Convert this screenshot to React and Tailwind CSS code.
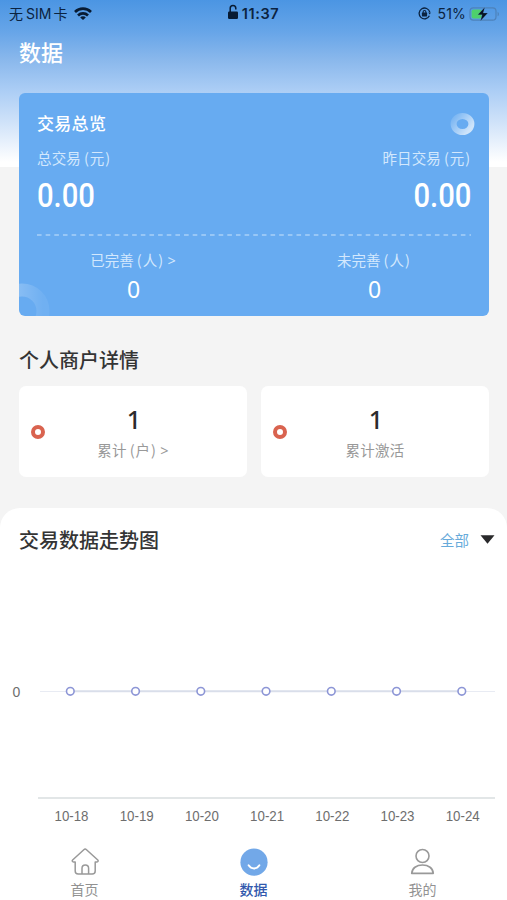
import React from 'react'

const days = ["10-18", "10-19", "10-20", "10-21", "10-22", "10-23", "10-24"];

const StatusBar = () => {
  return (
    <div className="grid h-[27px] grid-cols-3 items-center pl-[9px] pr-[7px] text-[14px] text-[#0b2340]">
      <div className="flex items-center">
        <span className="whitespace-nowrap">
          无<span className="ml-[3px] mr-[2px] font-[Inter] text-[14px] font-normal">SIM</span>卡
        </span>
        <svg className="ml-[7px] -mt-[1px]" width="18" height="13" viewBox="0 0 18 13" fill="none" stroke="#081b33" strokeWidth="2.7">
          <path d="M1 4.9a11.6 11.6 0 0 1 16 0" />
          <path d="M4 8.4a7.3 7.3 0 0 1 10 0" />
          <path d="M6.2 10.5a3.8 3.8 0 0 1 5.6 0L9 13z" fill="#081b33" stroke="none" />
        </svg>
      </div>
      <div className="flex items-center justify-center pr-[3px]">
        <svg className="-mt-[4px]" width="12" height="16" viewBox="0 0 12 16">
          <path d="M3.2 8V4.3a2.8 2.8 0 0 1 5.6 0v1.2" fill="none" stroke="#081b33" strokeWidth="1.5" />
          <rect x="1" y="7.4" width="10" height="7.6" rx="1.2" fill="#081b33" />
        </svg>
        <span className="ml-[3px] font-[Inter] text-[14.5px] font-semibold tracking-[0.6px]">11:37</span>
      </div>
      <div className="flex items-center justify-end">
        <svg width="13" height="13" viewBox="0 0 13 13" fill="none" stroke="#0b2340">
          <path d="M11.8 5.2A5.4 5.4 0 1 0 11.4 8.8" strokeWidth="1.3" />
          <path d="M10.2 5.4h2.6l-1 2z" fill="#0b2340" stroke="none" />
          <path d="M5.1 6V4.9a1.4 1.4 0 0 1 2.8 0V6" strokeWidth="1.1" />
          <rect x="3.9" y="5.6" width="5.2" height="3.8" rx=".6" fill="#0b2340" stroke="none" />
        </svg>
        <span className="ml-[6px] font-[Inter] text-[14px] tracking-[0.2px]">51%</span>
        <svg className="ml-[3px]" width="31" height="16" viewBox="0 0 31 16">
          <rect x="1" y="1.8" width="26" height="12.4" rx="3.4" fill="none" stroke="#4d82ba" strokeWidth="1.2" />
          <path d="M28.6 5.7c1.8.8 1.8 3.8 0 4.6z" fill="#4d82ba" />
          <rect x="2.6" y="3.4" width="10" height="9.2" rx="1.8" fill="#4ed06c" />
          <path d="M15.8 1.2L8.8 8.8h4.4L11.4 15l7.4-8h-4.6z" fill="#061322" stroke="#6ba7e8" strokeWidth=".2" />
        </svg>
      </div>
    </div>
  )
}

const Amount = ({ label, right }) => {
  return (
    <div className={right ? "flex flex-col items-end" : "flex flex-col items-start"}>
      <p className="h-[20px] text-[14.5px] leading-[20px] tracking-[0.15px] text-[#d3e8fd]">
        {label}<span className="ml-[3px] tracking-[0.9px]">(元)</span>
      </p>
      <p
        className={
          right
            ? "mt-[7px] origin-right scale-x-[0.86] font-[Roboto] text-[34px] font-medium leading-[40px]"
            : "mt-[7px] origin-left scale-x-[0.86] font-[Roboto] text-[34px] font-medium leading-[40px]"
        }
      >
        0.00
      </p>
    </div>
  )
}

const OverviewCard = () => {
  return (
    <div className="relative mx-[19px] mt-[17px] h-[223px] w-[470px] overflow-hidden rounded-[6px] bg-[#67abf1] px-[18px] text-white">
      <svg className="absolute right-[13px] top-[19px]" width="28" height="24" viewBox="0 0 28 24">
        <defs>
          <linearGradient id="ring" x1="0" y1="0" x2="1" y2="0.7">
            <stop offset="0" stopColor="#fff" stopOpacity="0.12" />
            <stop offset="1" stopColor="#fff" stopOpacity="0.68" />
          </linearGradient>
        </defs>
        <ellipse cx="14.5" cy="12" rx="8.9" ry="8" fill="none" stroke="url(#ring)" strokeWidth="6" />
      </svg>
      <svg className="absolute bottom-0 left-0" width="36" height="34" viewBox="0 0 36 34">
        <defs>
          <linearGradient id="corner" x1="0" y1="0" x2="1" y2="0">
            <stop offset="0.4" stopColor="#fff" stopOpacity="0.22" />
            <stop offset="1" stopColor="#fff" stopOpacity="0.06" />
          </linearGradient>
        </defs>
        <circle cx="3" cy="29" r="21" fill="none" stroke="url(#corner)" strokeWidth="13" />
      </svg>
      <h2 className="pt-[18px] text-[17px] font-medium leading-[24px] tracking-[0.3px]">交易总览</h2>
      <div className="mt-[13px] flex justify-between">
        <Amount label="总交易" />
        <Amount label="昨日交易" right />
      </div>
      <svg className="mt-[19px] block" width="434" height="2">
        <path d="M0 1H434" stroke="#a9d1f8" strokeWidth="1.6" strokeDasharray="4.6 4.05" />
      </svg>
      <div className="mt-[14px] flex text-center">
        <div className="w-[192px]">
          <p className="text-[14.5px] leading-[20px] text-[#d3e8fd]">
            已完善<span className="ml-[3px] tracking-[1px]">(人)</span> <span className="font-['Noto_Sans']">&gt;</span>
          </p>
          <p className="mt-[4px] pl-px font-['Noto_Sans'] text-[23px] leading-[30px]">0</p>
        </div>
        <div className="ml-[48px] w-[194px]">
          <p className="text-[14.5px] leading-[20px] text-[#d3e8fd]">
            未完善<span className="ml-[3px] tracking-[1px]">(人)</span>
          </p>
          <p className="mt-[4px] pl-px font-['Noto_Sans'] text-[23px] leading-[30px]">0</p>
        </div>
      </div>
    </div>
  )
}

const MerchantCard = ({ children }) => {
  return (
    <div className="relative h-[91px] flex-1 rounded-[7px] bg-white pt-[17px] text-center">
      <span className="absolute left-[12px] top-[39px] size-[14px] rounded-full border-[4px] border-[#d9634f]" />
      <p className="pl-[2px] font-['Noto_Sans'] text-[25px] font-medium leading-[32px] text-[#2b2b2d]">1</p>
      <p className="mt-[5px] text-[14.5px] leading-[20px] tracking-[0.2px] text-[#999]">{children}</p>
    </div>
  )
}

const TrendChart = () => {
  return (
    <svg className="block" width="507" height="270" viewBox="0 0 507 270">
      <path d="M40 131.5H495" stroke="#e8ebf3" strokeWidth="1.2" />
      <path d="M70 131.3H462" stroke="#d9deea" strokeWidth="2" />
      <path d="M38 238H495" stroke="#d8dedf" strokeWidth="1.6" />
      <text x="12.5" y="136.5" fontSize="14" fill="#6e6e6e" fontFamily="Liberation Sans, sans-serif">0</text>
      {days.map((day, i) => (
        <g key={day}>
          <circle cx={70.3 + i * 65.25} cy="131.3" r="3.8" fill="#fff" stroke="#8d96d6" strokeWidth="1.6" />
          <text
            x={71.5 + i * 65.2}
            y="261"
            textAnchor="middle"
            fontSize="14"
            textLength="34"
            lengthAdjust="spacingAndGlyphs"
            fill="#6e6e6e"
            fontFamily="Liberation Sans, sans-serif"
          >
            {day}
          </text>
        </g>
      ))}
    </svg>
  )
}

const TabBar = () => {
  return (
    <div className="grid h-[70px] grid-cols-3 text-center text-[14px] leading-[20px] text-[#929292]">
      <div className="flex flex-col items-center pt-[17px]">
        <svg width="30" height="30" viewBox="0 0 30 30" fill="none" stroke="#999" strokeWidth="1.5" strokeLinejoin="round">
          <path d="M13.8 2.7a2 2 0 0 1 2.7 0L27.8 13c.7.8.3 1.9-.8 1.9h-1.8v9.2a3 3 0 0 1-3 3H8.2a3 3 0 0 1-3-3v-9.2H3.4c-1.1 0-1.6-1.1-.8-1.9z" />
          <path d="M12 27v-5.7a3.3 3.3 0 0 1 6.6 0V27" />
        </svg>
        <span className="mt-[2px]">首页</span>
      </div>
      <div className="flex flex-col items-center pt-[17px]">
        <svg width="30" height="30" viewBox="0 0 30 30">
          <circle cx="15" cy="15.2" r="13.6" fill="#72a8e8" />
          <path d="M9.6 18.3c2.7 4.2 8.1 4.2 10.8 0" fill="none" stroke="#fff" strokeWidth="1.9" strokeLinecap="round" />
        </svg>
        <span className="mt-[2px] font-medium text-[#3158ad]">数据</span>
      </div>
      <div className="flex flex-col items-center pt-[17px]">
        <svg width="30" height="30" viewBox="0 0 30 30" fill="none" stroke="#999" strokeWidth="1.6" strokeLinejoin="round">
          <circle cx="14.5" cy="9" r="6.5" />
          <path d="M3.7 26.4c.3-5.2 4.8-8.4 10.8-8.4s10.5 3.2 10.8 8.4z" />
        </svg>
        <span className="mt-[2px]">我的</span>
      </div>
    </div>
  )
}

const App = () => {
  return (
    <div className="flex h-[900px] w-[507px] flex-col overflow-hidden bg-[#f4f4f4] bg-[linear-gradient(#4b95e3_0px,#67a5e8_32px,#8ab8ec_60px,#abcdf5_90px,#cfe2f9_122px,#fff_162px)] bg-[length:100%_167px] bg-no-repeat font-['Noto_Sans_CJK_SC',sans-serif]">
      <StatusBar />
      <h1 className="mt-[8px] pl-[19px] text-[22px] font-medium leading-[32px] text-white">数据</h1>
      <div className="-mt-px flex flex-col pt-[10px]">
        <OverviewCard />
      </div>
      <h2 className="mt-[30px] pl-[19px] text-[20px] font-medium leading-[28px] text-[#343434]">个人商户详情</h2>
      <div className="ml-[19px] mr-[18px] mt-[12px] flex gap-[14px]">
        <MerchantCard>
          累计<span className="ml-[3px] tracking-[0.9px]">(户)</span> <span className="font-['Noto_Sans']">&gt;</span>
        </MerchantCard>
        <MerchantCard>累计激活</MerchantCard>
      </div>
      <div className="mt-[31px] flex-1 rounded-t-[20px] bg-white">
        <div className="flex h-[52px] items-center justify-between pl-[19px] pr-[12px] pt-[11px]">
          <h2 className="text-[20px] font-medium leading-[28px] text-[#343434]">交易数据走势图</h2>
          <div className="flex items-center text-[14.5px] text-[#67aada]">
            全部
            <svg className="ml-[11px]" width="15" height="9" viewBox="0 0 15 9">
              <path d="M.5.3h14L7.5 8.8z" fill="#29292b" />
            </svg>
          </div>
        </div>
        <TrendChart />
        <TabBar />
      </div>
    </div>
  )
}

export default App
